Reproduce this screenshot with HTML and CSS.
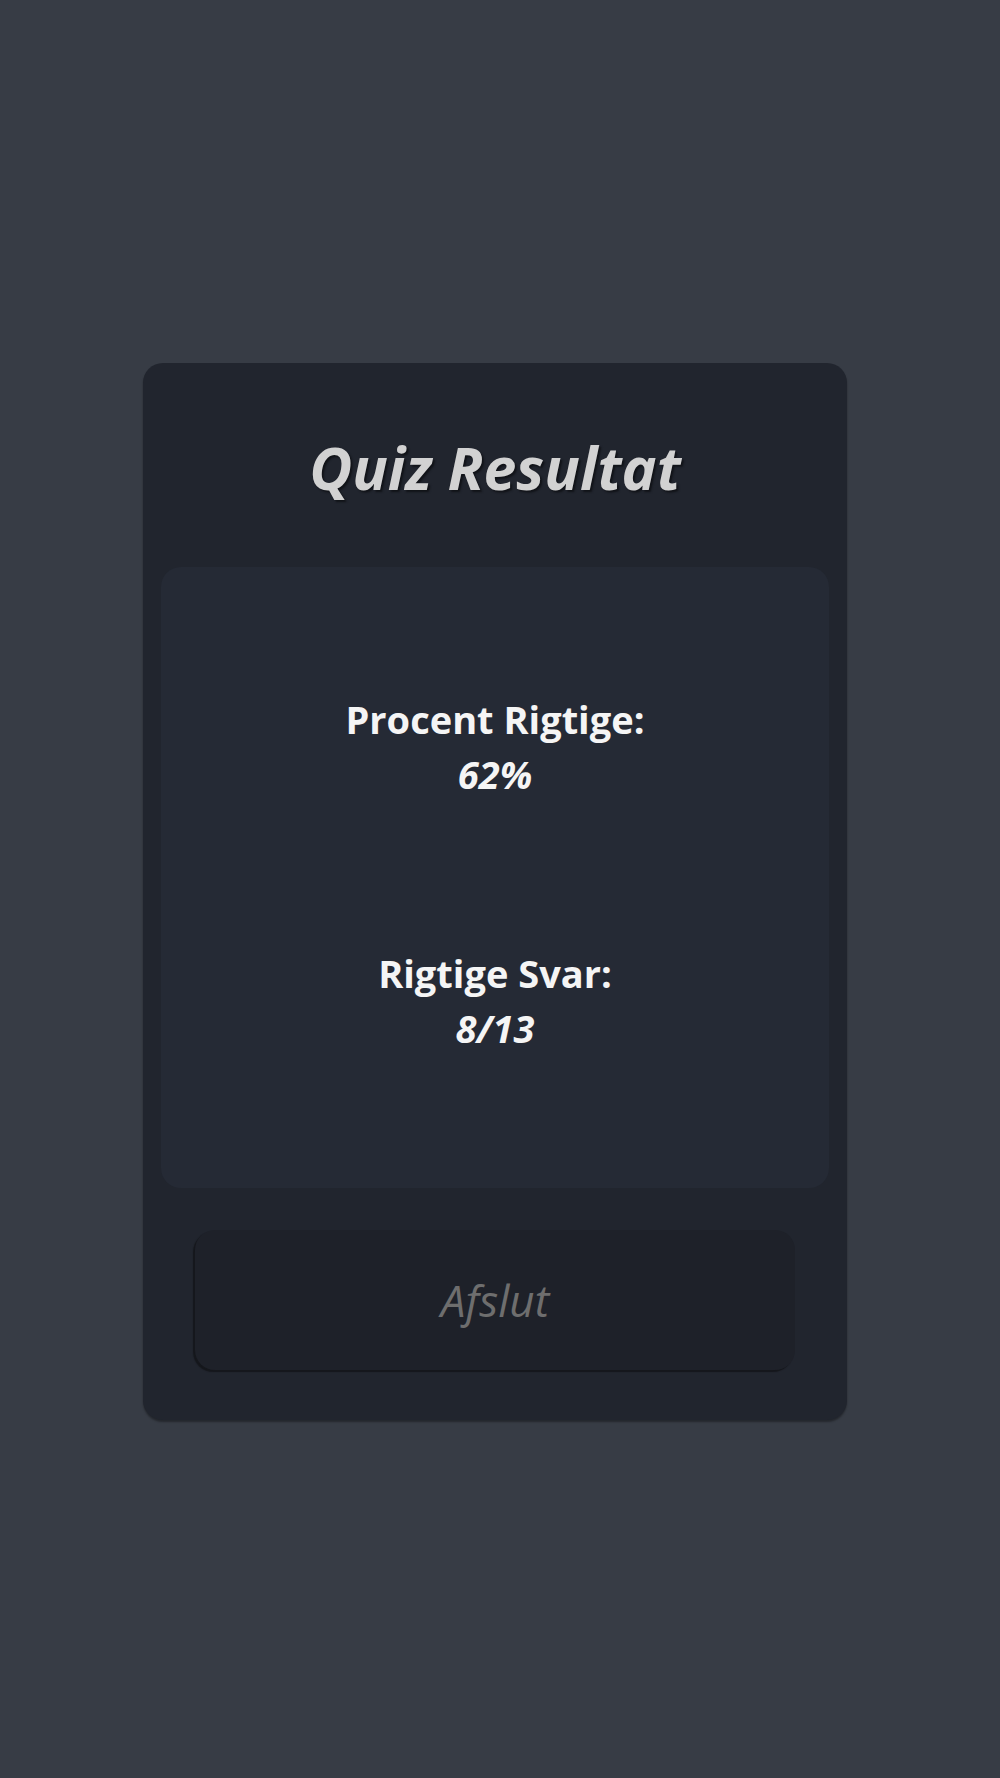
FILE: index.html
```html
<!DOCTYPE html>
<html lang="da">
<head>
    <meta charset="UTF-8">
    <meta name="viewport" content="width=device-width, initial-scale=1.0">
    <title>Quiz Resultat</title>
    <link rel="stylesheet" href="styles.css">
</head>
<body>
    <div class="result-card">
        <h1 class="result-title">Quiz Resultat</h1>
        <div class="result-panel">
            <div class="stat">
                <p class="stat-label">Procent Rigtige:</p>
                <p class="stat-value">62%</p>
            </div>
            <div class="stat">
                <p class="stat-label">Rigtige Svar:</p>
                <p class="stat-value">8/13</p>
            </div>
        </div>
        <button type="button" class="finish-btn">Afslut</button>
    </div>
</body>
</html>
```

FILE: styles.css
```css
html, body {
    height: 100%;
}
body {
    font-family: "Open Sans", "Liberation Sans", sans-serif;
    margin: 0;
    background-color: #373c45;
    display: flex;
    align-items: center;
    justify-content: center;
}
.result-card {
    width: 704px;
    box-sizing: border-box;
    margin: 5px 10px 0 0;
    padding: 63px 18px 50px;
    background-color: #21252e;
    border-radius: 20px;
    box-shadow: 0 2px 2px rgba(0, 0, 0, 0.35);
    display: flex;
    flex-direction: column;
    align-items: center;
}
.result-title {
    margin: 0 0 59px;
    font-size: 59px;
    font-weight: 700;
    font-style: italic;
    line-height: 82px;
    color: #d2d2d2;
    text-shadow: 2px 2px 2px #111318;
}
.result-panel {
    align-self: stretch;
    height: 621px;
    box-sizing: border-box;
    padding-top: 125px;
    background-color: #252a35;
    border-radius: 20px;
    display: flex;
    flex-direction: column;
    align-items: center;
    gap: 144px;
}
.stat {
    text-align: center;
    color: #f5f5f5;
}
.stat p {
    margin: 0;
    font-size: 38px;
    line-height: 55px;
}
.stat-label {
    font-weight: 700;
}
.stat-value {
    font-weight: 700;
    font-style: italic;
}
.finish-btn {
    margin-top: 42px;
    width: 600px;
    height: 140px;
    border: none;
    border-radius: 20px;
    background-color: #1e2129;
    box-shadow: -2px 2px 1px #15171c;
    font-family: inherit;
    font-size: 44px;
    font-style: italic;
    color: #6e6e6e;
    cursor: pointer;
}
```
